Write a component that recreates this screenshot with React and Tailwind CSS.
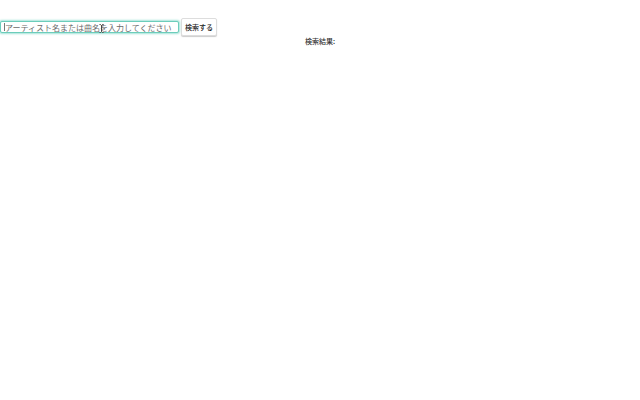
import { useState } from "react";

const SearchForm = ({ onSearch }) => {
  const [keyword, setKeyword] = useState("");

  const handleSubmit = (e) => {
    e.preventDefault();
    onSearch(keyword);
  };

  return (
    <form onSubmit={handleSubmit} className="flex items-center gap-[2px]">
      <div className="relative flex">
        <input
          type="text"
          aria-label="アーティスト名または曲名"
          placeholder="アーティスト名または曲名を入力してください"
          value={keyword}
          onChange={(e) => setKeyword(e.target.value)}
          className="w-[179px] h-3 pl-1 text-[8px] leading-[10px] text-gray-800 placeholder:text-[#6b6b6b] bg-white border border-[#6ccdbb] rounded-xs shadow-[0_0_2px_1px_#a5e3d8] outline-none"
        />
        {/* Text caret */}
        {!keyword && (
          <span className="absolute left-1 top-[2px] w-px h-2 bg-[#777777] pointer-events-none" />
        )}
        {/* Mouse pointer */}
        <svg
          viewBox="0 0 5 9"
          className="absolute left-[99px] top-[3px] w-[5px] h-[9px] pointer-events-none"
          fill="none"
          stroke="#444444"
          strokeWidth="1"
          aria-hidden="true"
        >
          <path d="M0.5 0.5H1.5L2.5 1.5L3.5 0.5H4.5M2.5 1.5V7.5M0.5 8.5H1.5L2.5 7.5L3.5 8.5H4.5" />
        </svg>
      </div>
      <button
        type="submit"
        className="h-[18px] px-[3px] text-[7px] leading-[10px] font-medium text-[#222222] bg-white border border-[#dddddd] rounded-xs shadow-[0_1px_1px_#cccccc] whitespace-nowrap"
      >
        検索する
      </button>
    </form>
  );
};

const App = () => {
  const [result, setResult] = useState("");

  return (
    <main className="min-h-screen bg-white pt-[18px] font-['Noto_Sans_CJK_JP',sans-serif]">
      <SearchForm onSearch={setResult} />
      <p className="text-center text-[7px] leading-[10px] font-medium text-[#333333]">
        検索結果:{result}
      </p>
    </main>
  );
};

export default App;
